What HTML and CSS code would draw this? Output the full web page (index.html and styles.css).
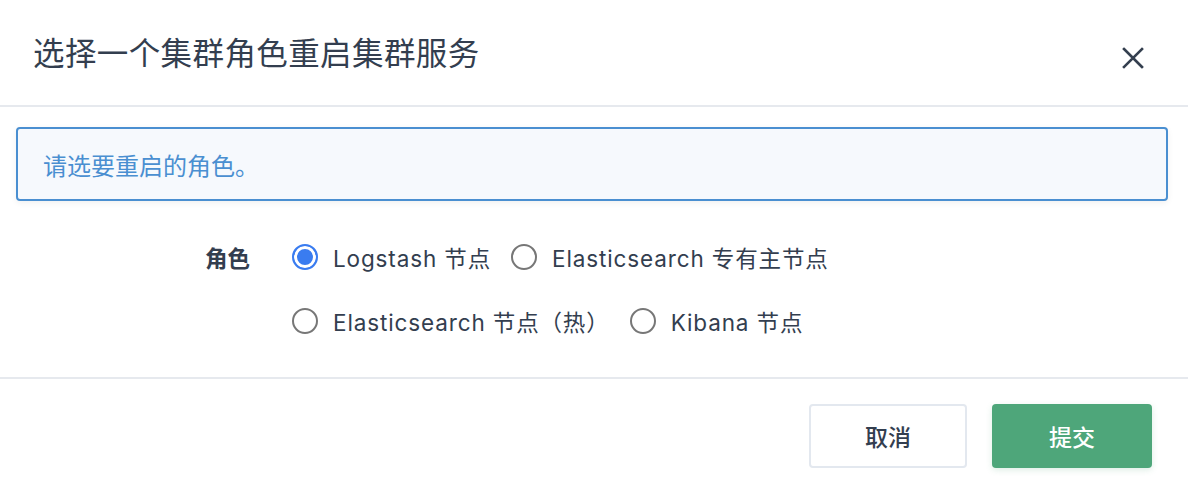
FILE: index.html
```html
<!DOCTYPE html>
<html lang="zh">
<head>
<meta charset="utf-8">
<title>选择一个集群角色重启集群服务</title>
<link rel="stylesheet" href="styles.css">
</head>
<body>
<div class="dialog">
  <header class="dlg-head">
    <h2 class="dlg-title">选择一个集群角色重启集群服务</h2>
    <button class="close" aria-label="关闭">
      <svg viewBox="0 0 22 22" width="22" height="22"><path d="M2 2 L20 20 M20 2 L2 20" stroke="#343f4f" stroke-width="2.6" stroke-linecap="square" fill="none"/></svg>
    </button>
  </header>
  <div class="dlg-body">
    <div class="alert">请选要重启的角色。</div>
    <div class="form-row">
      <div class="form-label">角色</div>
      <div class="radio-group">
        <label class="radio checked"><span class="dot"></span><span class="rtext">Logstash 节点</span></label>
        <label class="radio"><span class="dot"></span><span class="rtext">Elasticsearch 专有主节点</span></label>
        <label class="radio"><span class="dot"></span><span class="rtext">Elasticsearch 节点（热）</span></label>
        <label class="radio"><span class="dot"></span><span class="rtext">Kibana 节点</span></label>
      </div>
    </div>
  </div>
  <footer class="dlg-foot">
    <button class="btn btn-cancel">取消</button>
    <button class="btn btn-primary">提交</button>
  </footer>
</div>
</body>
</html>
```
FILE: styles.css
```css
* { box-sizing: border-box; }
html, body { margin: 0; padding: 0; background: #fff; }
body {
  font-family: "Inter", "Noto Sans CJK SC", sans-serif;
  color: #333e4f;
}
.dialog { width: 1188px; height: 486px; background: #fff; }
.dlg-head {
  height: 107px;
  border-bottom: 2px solid #e6e9ee;
  display: flex;
  align-items: center;
  justify-content: space-between;
  padding: 0 44px 0 33px;
}
.dlg-title {
  margin: 0 0 4px;
  font-family: "Noto Sans CJK SC", sans-serif;
  font-size: 31.5px;
  letter-spacing: 0.4px;
  font-weight: 400;
  color: #333e4f;
  line-height: 40px;
}
.close {
  border: 0; background: none; padding: 0; margin-top: 10px;
  width: 22px; height: 22px; display: flex;
}
.dlg-body { padding: 20px 20px 0 16px; }
.alert {
  height: 74px;
  border: 2px solid #4a8fd1;
  border-radius: 4px;
  background: #f6f9fd;
  box-shadow: 0 2px 6px rgba(0,0,0,0.06);
  display: flex;
  align-items: center;
  padding-left: 25px;
  font-family: "Noto Sans CJK SC", sans-serif;
  font-size: 24px;
  color: #4a8fd1;
}
.form-row {
  display: flex;
  padding: 36px 0 36px 189px;
  height: 176px;
}
.form-label {
  width: 87px;
  line-height: 40px;
  font-family: "Noto Sans CJK SC", sans-serif;
  font-size: 22.5px;
  font-weight: 700;
  color: #333e4f;
}
.radio-group {
  width: 600px;
  display: flex;
  flex-wrap: wrap;
  row-gap: 24px;
}
.radio {
  display: flex;
  align-items: center;
  height: 40px;
  margin-right: 20px;
  font-size: 22.5px;
  letter-spacing: 0.87px;
  color: #333e4f;
}
.dot {
  width: 26px; height: 26px;
  border: 2px solid #777;
  border-radius: 50%;
  margin-right: 15px;
  background: #fff;
  flex: none;
}
.radio.checked .dot {
  border-color: #3a7cf0;
  background: #3a7cf0;
  box-shadow: inset 0 0 0 3px #fff;
}
.dlg-foot {
  border-top: 2px solid #e6e9ee;
  display: flex;
  justify-content: flex-end;
  gap: 25px;
  padding: 25px 36px 0 0;
}
.btn {
  height: 64px;
  border-radius: 4px;
  font-family: "Noto Sans CJK SC", sans-serif;
  font-size: 23px;
  font-weight: 500;
  cursor: pointer;
}
.btn-cancel {
  width: 158px;
  border: 2px solid #e3e8ef;
  background: #fff;
  color: #333e4f;
}
.btn-primary {
  width: 160px;
  border: 0;
  background: #4ea67a;
  color: #fff;
  box-shadow: 0 2px 6px rgba(78,166,122,0.2);
}
```
